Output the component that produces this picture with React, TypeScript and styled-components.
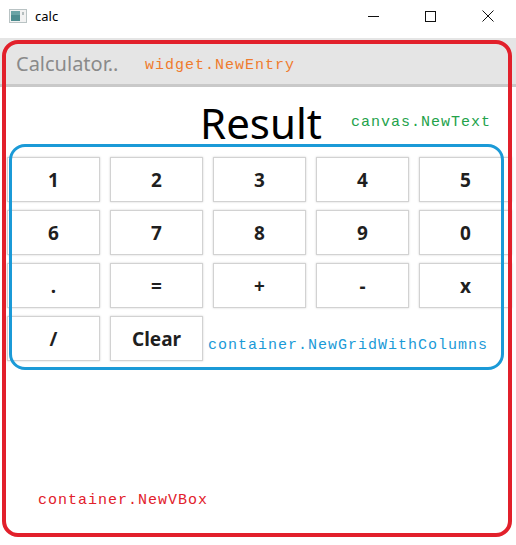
import styled, { createGlobalStyle } from 'styled-components'

const GlobalStyle = createGlobalStyle`
  html, body {
    margin: 0;
    padding: 0;
    overflow: hidden;
    background: #ffffff;
  }
  * {
    box-sizing: border-box;
  }
`

const KEYS = ['1', '2', '3', '4', '5', '6', '7', '8', '9', '0', '.', '=', '+', '-', 'x', '/', 'Clear']

type Note = {
  text: string
  color: string
  left: number
  top: number
}

const NOTES: Note[] = [
  { text: 'widget.NewEntry', color: '#ef7b2d', left: 145, top: 58 },
  { text: 'canvas.NewText', color: '#23a24b', left: 351, top: 115 },
  { text: 'container.NewGridWithColumns', color: '#1b9ad7', left: 208, top: 338 },
  { text: 'container.NewVBox', color: '#e2202b', left: 38, top: 493 },
]

const AppIcon = () => (
  <svg width="18" height="14" viewBox="0 0 18 14">
    <rect x="0.5" y="0.5" width="17" height="13" fill="#f2f2f2" stroke="#b9c3c4" />
    <rect x="2" y="2" width="9" height="10" fill="#4d8c8f" />
    <rect x="2" y="2" width="9" height="4" fill="#6aa3a5" />
    <line x1="14" y1="3" x2="14" y2="6" stroke="#7a8a8c" />
  </svg>
)

const App = () => {
  return (
    <>
      <GlobalStyle />
      <Window>
        <TitleBar>
          <AppIcon />
          <Title>calc</Title>
          <Controls>
            <ControlButton>
              <svg width="11" height="11" viewBox="0 0 11 11">
                <line x1="0" y1="5.5" x2="11" y2="5.5" stroke="#111" />
              </svg>
            </ControlButton>
            <ControlButton>
              <svg width="11" height="11" viewBox="0 0 11 11">
                <rect x="0.5" y="0.5" width="10" height="10" fill="none" stroke="#111" />
              </svg>
            </ControlButton>
            <ControlButton>
              <svg width="12" height="12" viewBox="0 0 12 12">
                <line x1="0.5" y1="0.5" x2="11.5" y2="11.5" stroke="#111" />
                <line x1="11.5" y1="0.5" x2="0.5" y2="11.5" stroke="#111" />
              </svg>
            </ControlButton>
          </Controls>
        </TitleBar>

        <Content>
          <Entry>
            <Placeholder>Calculator..</Placeholder>
          </Entry>
          <ResultRow>
            <ResultText>Result</ResultText>
          </ResultRow>
          <KeyGrid>
            {KEYS.map((key) => (
              <Key key={key}>{key}</Key>
            ))}
          </KeyGrid>
        </Content>

        {/* annotation overlays */}
        <Frame $color="#e2202b" $left={2} $top={40} $width={510} $height={497} $thick={4} />
        <Frame $color="#1b9ad7" $left={9} $top={144} $width={495} $height={226} $thick={3} />
        {NOTES.map((note) => (
          <NoteLabel key={note.text} $color={note.color} $left={note.left} $top={note.top}>
            {note.text}
          </NoteLabel>
        ))}
      </Window>
    </>
  )
}

export default App

const Window = styled.div`
  position: relative;
  width: 516px;
  height: 545px;
  overflow: hidden;
  background: #ffffff;
  font-family: 'Noto Sans', 'Open Sans', sans-serif;
`

const TitleBar = styled.div`
  display: flex;
  align-items: center;
  height: 32px;
  padding-left: 9px;
`

const Title = styled.span`
  margin-left: 8px;
  font-size: 13px;
  color: #000;
`

const Controls = styled.div`
  display: flex;
  margin-left: auto;
  height: 100%;
`

const ControlButton = styled.div`
  display: flex;
  align-items: center;
  justify-content: center;
  width: 57px;
  height: 100%;
`

const Content = styled.div`
  display: flex;
  flex-direction: column;
  padding-top: 6px;
`

const Entry = styled.div`
  display: flex;
  align-items: center;
  height: 49px;
  padding: 5px 0 0 16px;
  background: #e5e5e5;
  border-bottom: 3px solid #c9c9c9;
`

const Placeholder = styled.span`
  font-size: 20px;
  color: #8a8a8a;
`

const ResultRow = styled.div`
  display: flex;
  align-items: center;
  justify-content: center;
  height: 70px;
`

const ResultText = styled.span`
  font-size: 42px;
  line-height: 1;
  color: #000;
  margin-left: 6px;
  margin-top: 2px;
`

const KeyGrid = styled.div`
  display: grid;
  grid-template-columns: repeat(5, 93px);
  grid-auto-rows: 45px;
  column-gap: 10px;
  row-gap: 8px;
  padding-left: 7px;
`

const Key = styled.div`
  display: flex;
  align-items: center;
  justify-content: center;
  background: #ffffff;
  border: 1px solid #d2d2d2;
  box-shadow: 0 0 2px rgba(0, 0, 0, 0.18);
  font-size: 19px;
  font-weight: 700;
  color: #1f1f1f;
`

const Frame = styled.div<{ $color: string; $left: number; $top: number; $width: number; $height: number; $thick: number }>`
  position: absolute;
  left: ${({ $left }) => $left}px;
  top: ${({ $top }) => $top}px;
  width: ${({ $width }) => $width}px;
  height: ${({ $height }) => $height}px;
  border: ${({ $thick }) => $thick}px solid ${({ $color }) => $color};
  border-radius: 16px;
  pointer-events: none;
`

const NoteLabel = styled.span<{ $color: string; $left: number; $top: number }>`
  position: absolute;
  left: ${({ $left }) => $left}px;
  top: ${({ $top }) => $top}px;
  font-family: 'Liberation Mono', 'DejaVu Sans Mono', monospace;
  font-size: 15px;
  line-height: 16px;
  letter-spacing: 1px;
  color: ${({ $color }) => $color};
  white-space: nowrap;
`
